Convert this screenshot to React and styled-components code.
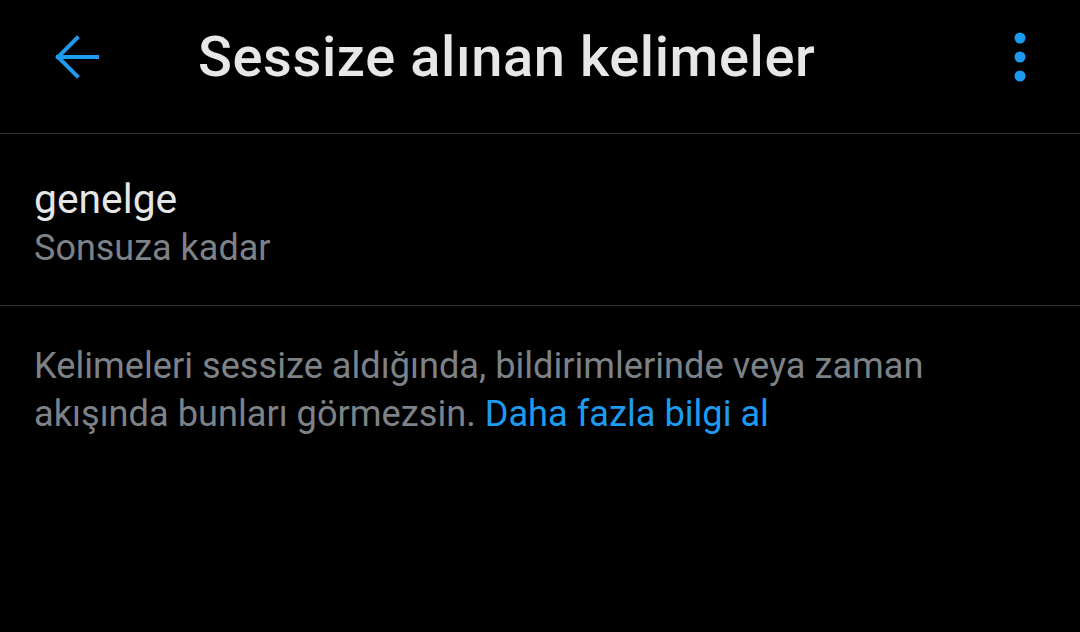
import React from "react";
import styled, { createGlobalStyle } from "styled-components";

const GlobalStyle = createGlobalStyle`
  html, body {
    margin: 0;
    padding: 0;
    background: #000;
  }
  body {
    font-family: Roboto, "Noto Sans", sans-serif;
    -webkit-font-smoothing: antialiased;
  }
`;

const Screen = styled.div`
  width: 1080px;
  height: 632px;
  background: #000;
  display: flex;
  flex-direction: column;
  overflow: hidden;
`;

const Header = styled.header`
  height: 134px;
  display: flex;
  align-items: center;
  padding: 0 40px 20px 47px;
  border-bottom: 1px solid #2f3336;
  box-sizing: border-box;
`;

const IconButton = styled.button`
  background: none;
  border: 0;
  padding: 0;
  display: flex;
  align-items: center;
  justify-content: center;
  width: ${({ size }) => size}px;
  height: ${({ size }) => size}px;
  cursor: pointer;
`;

const Title = styled.h1`
  flex: 1;
  margin: 0 0 0 91px;
  font-size: 56px;
  font-weight: 500;
  color: #e6e7e8;
  letter-spacing: 0.6px;
`;

const WordRow = styled.div`
  padding: 0 34px;
  height: 172px;
  display: flex;
  flex-direction: column;
  justify-content: center;
  border-bottom: 1px solid #2f3336;
  box-sizing: border-box;
`;

const Word = styled.div`
  font-size: 40.8px;
  color: #e4e6e7;
  line-height: 50px;
  margin-top: 6px;
`;

const Duration = styled.div`
  font-size: 36px;
  color: #7c8287;
  line-height: 48px;
`;

const Note = styled.p`
  margin: 0;
  padding: 36px 120px 0 34px;
  font-size: 36.2px;
  line-height: 48px;
  color: #7c8287;
`;

const Link = styled.a`
  color: #1d9bf0;
  text-decoration: none;
`;

const BackArrow = () => (
  <svg width="48" height="48" viewBox="0 0 48 48" fill="none">
    <path
      d="M44 24H5M24 5L5 24l19 19"
      stroke="#1d9bf0"
      strokeWidth="4"
      strokeLinecap="square"
    />
  </svg>
);

const MoreDots = () => (
  <svg width="12" height="52" viewBox="0 0 12 52">
    <circle cx="6" cy="7" r="5.5" fill="#1d9bf0" />
    <circle cx="6" cy="26" r="5.5" fill="#1d9bf0" />
    <circle cx="6" cy="45" r="5.5" fill="#1d9bf0" />
  </svg>
);

export default function App() {
  return (
    <>
      <GlobalStyle />
      <Screen>
        <Header>
          <IconButton size={60}>
            <BackArrow />
          </IconButton>
          <Title>Sessize alınan kelimeler</Title>
          <IconButton size={40}>
            <MoreDots />
          </IconButton>
        </Header>
        <WordRow>
          <Word>genelge</Word>
          <Duration>Sonsuza kadar</Duration>
        </WordRow>
        <Note>
          Kelimeleri sessize aldığında, bildirimlerinde veya zaman akışında
          bunları görmezsin. <Link href="#">Daha fazla bilgi al</Link>
        </Note>
      </Screen>
    </>
  );
}
